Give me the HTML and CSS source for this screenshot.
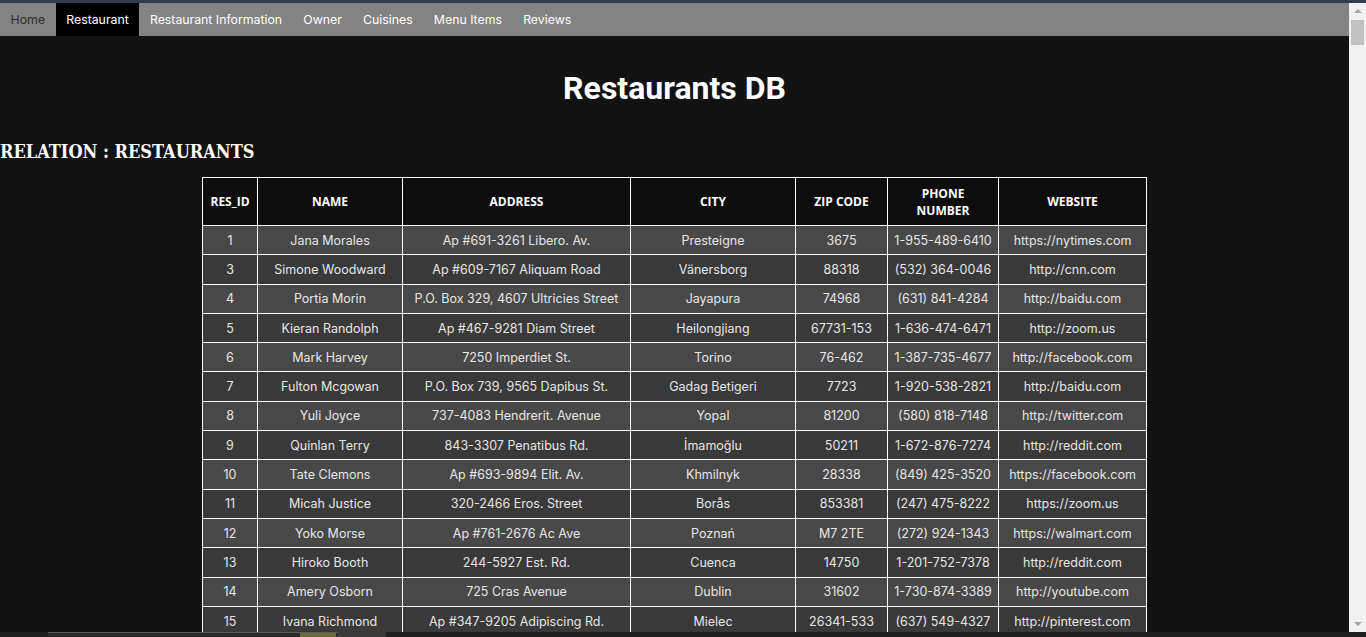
FILE: index.html
```html
<!DOCTYPE html>
<html lang="en">
<head>
<meta charset="utf-8">
<title>Restaurants DB</title>
<link rel="stylesheet" href="styles.css">
</head>
<body>
<div class="topstrip"></div>
<div class="page">
  <nav class="nav">
    <a class="nav-item home" href="#">Home</a>
    <a class="nav-item active" href="#">Restaurant</a>
    <a class="nav-item" href="#">Restaurant Information</a>
    <a class="nav-item" href="#">Owner</a>
    <a class="nav-item" href="#">Cuisines</a>
    <a class="nav-item" href="#">Menu Items</a>
    <a class="nav-item" href="#">Reviews</a>
  </nav>
  <main>
    <h1 class="title">Restaurants DB</h1>
    <h2 class="relation">RELATION : RESTAURANTS</h2>
    <table class="db">
      <colgroup>
        <col class="c-id"><col class="c-name"><col class="c-addr"><col class="c-city"><col class="c-zip"><col class="c-phone"><col class="c-web">
      </colgroup>
      <thead>
        <tr><th>RES_ID</th><th>NAME</th><th>ADDRESS</th><th>CITY</th><th>ZIP CODE</th><th>PHONE<br>NUMBER</th><th>WEBSITE</th></tr>
      </thead>
      <tbody>
        <tr><td>1</td><td>Jana Morales</td><td>Ap #691-3261 Libero. Av.</td><td>Presteigne</td><td>3675</td><td>1-955-489-6410</td><td>https://nytimes.com</td></tr>
        <tr><td>3</td><td>Simone Woodward</td><td>Ap #609-7167 Aliquam Road</td><td>Vänersborg</td><td>88318</td><td>(532) 364-0046</td><td>http://cnn.com</td></tr>
        <tr><td>4</td><td>Portia Morin</td><td>P.O. Box 329, 4607 Ultricies Street</td><td>Jayapura</td><td>74968</td><td>(631) 841-4284</td><td>http://baidu.com</td></tr>
        <tr><td>5</td><td>Kieran Randolph</td><td>Ap #467-9281 Diam Street</td><td>Heilongjiang</td><td>67731-153</td><td>1-636-474-6471</td><td>http://zoom.us</td></tr>
        <tr><td>6</td><td>Mark Harvey</td><td>7250 Imperdiet St.</td><td>Torino</td><td>76-462</td><td>1-387-735-4677</td><td>http://facebook.com</td></tr>
        <tr><td>7</td><td>Fulton Mcgowan</td><td>P.O. Box 739, 9565 Dapibus St.</td><td>Gadag Betigeri</td><td>7723</td><td>1-920-538-2821</td><td>http://baidu.com</td></tr>
        <tr><td>8</td><td>Yuli Joyce</td><td>737-4083 Hendrerit. Avenue</td><td>Yopal</td><td>81200</td><td>(580) 818-7148</td><td>http://twitter.com</td></tr>
        <tr><td>9</td><td>Quinlan Terry</td><td>843-3307 Penatibus Rd.</td><td>İmamoğlu</td><td>50211</td><td>1-672-876-7274</td><td>http://reddit.com</td></tr>
        <tr><td>10</td><td>Tate Clemons</td><td>Ap #693-9894 Elit. Av.</td><td>Khmilnyk</td><td>28338</td><td>(849) 425-3520</td><td>https://facebook.com</td></tr>
        <tr><td>11</td><td>Micah Justice</td><td>320-2466 Eros. Street</td><td>Borås</td><td>853381</td><td>(247) 475-8222</td><td>https://zoom.us</td></tr>
        <tr><td>12</td><td>Yoko Morse</td><td>Ap #761-2676 Ac Ave</td><td>Poznań</td><td>M7 2TE</td><td>(272) 924-1343</td><td>https://walmart.com</td></tr>
        <tr><td>13</td><td>Hiroko Booth</td><td>244-5927 Est. Rd.</td><td>Cuenca</td><td>14750</td><td>1-201-752-7378</td><td>http://reddit.com</td></tr>
        <tr><td>14</td><td>Amery Osborn</td><td>725 Cras Avenue</td><td>Dublin</td><td>31602</td><td>1-730-874-3389</td><td>http://youtube.com</td></tr>
        <tr><td>15</td><td>Ivana Richmond</td><td>Ap #347-9205 Adipiscing Rd.</td><td>Mielec</td><td>26341-533</td><td>(637) 549-4327</td><td>http://pinterest.com</td></tr>
      </tbody>
    </table>
  </main>
</div>
<div class="scrollbar">
  <span class="sb-up"></span>
  <span class="sb-thumb"></span>
  <span class="sb-track"></span>
  <span class="sb-down"></span>
</div>
<div class="bottomstrip">
  <div class="bs-tab"><span class="bs-leaf"></span></div>
  <div class="bs-btn"></div>
</div>
</body>
</html>
```
FILE: styles.css
```css
html, body {
  margin: 0;
  padding: 0;
}
body {
  background: #121212;
  color: #ffffff;
  font-family: Inter, "Noto Sans", sans-serif;
}
.topstrip {
  height: 3px;
  background: #353b47;
}
.page {
  margin-right: 17px;
}
.nav {
  display: flex;
  background: #838383;
  height: 33px;
}
.nav-item {
  display: flex;
  align-items: center;
  padding: 0 10.6px;
  color: #ffffff;
  text-decoration: none;
  font-size: 12.3px;
}
.nav-item.home {
  color: #2e2e2e;
}
.nav-item.active {
  background: #000000;
}
.title {
  margin: 33px 0 0;
  font-family: Roboto, sans-serif;
  font-weight: 700;
  font-size: 32px;
  line-height: 38px;
  text-align: center;
}
.relation {
  margin: 34px 0 0;
  font-family: "DejaVu Serif", serif;
  font-stretch: condensed;
  font-weight: 700;
  font-size: 18px;
  line-height: 22px;
}
.db {
  margin: 14px auto 0;
  width: 944px;
  table-layout: fixed;
  border-collapse: collapse;
}
.c-id { width: 55px; }
.c-name { width: 145px; }
.c-addr { width: 228px; }
.c-city { width: 165px; }
.c-zip { width: 92px; }
.c-phone { width: 111px; }
.c-web { width: 148px; }
.db th, .db td {
  border: 1px solid #ffffff;
  text-align: center;
  padding: 0 4px;
}
.db th {
  background: #0d0d0d;
  font-family: "Open Sans", sans-serif;
  font-weight: 700;
  font-size: 12px;
  line-height: 17px;
  height: 47px;
}
.db td {
  height: 28.3px;
  font-size: 12.5px;
  color: #e6e6e6;
  white-space: nowrap;
}
.db tbody tr:nth-child(odd) td {
  background: #484848;
}
.db tbody tr:nth-child(even) td {
  background: #393939;
}
.scrollbar {
  position: fixed;
  top: 3px;
  right: 0;
  bottom: 5px;
  width: 17px;
  background: #f1f1f1;
  display: flex;
  flex-direction: column;
  align-items: center;
}
.sb-up {
  margin-top: 6px;
  width: 0;
  height: 0;
  border-left: 4px solid transparent;
  border-right: 4px solid transparent;
  border-bottom: 4px solid #a3a3a3;
}
.sb-thumb {
  margin-top: 7px;
  width: 13px;
  height: 25px;
  background: #c1c1c1;
}
.sb-track {
  flex: 1;
}
.sb-down {
  margin-bottom: 6px;
  width: 0;
  height: 0;
  border-left: 4px solid transparent;
  border-right: 4px solid transparent;
  border-top: 4px solid #a3a3a3;
}
.bottomstrip {
  position: fixed;
  left: 0;
  right: 0;
  bottom: 0;
  height: 5px;
  background: #1e1e1e;
  display: flex;
}
.bs-tab {
  margin-left: 48px;
  width: 290px;
  background: #2b2b2b;
  border-top: 1px solid #5a5a5a;
  position: relative;
}
.bs-leaf {
  position: absolute;
  right: 2px;
  top: 0;
  width: 36px;
  height: 5px;
  background: #6b6a3a;
}
.bs-btn {
  width: 48px;
  background: #383838;
}
```
